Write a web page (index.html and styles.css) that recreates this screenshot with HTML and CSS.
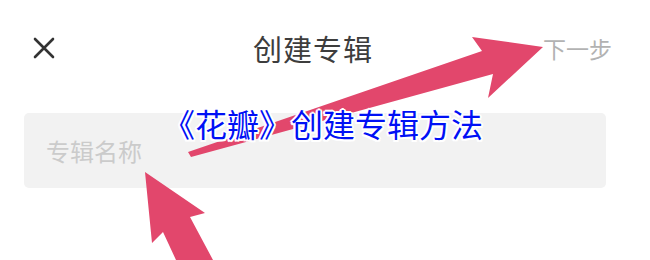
FILE: index.html
```html
<!DOCTYPE html>
<html lang="zh">
<head>
  <meta charset="UTF-8">
  <meta name="viewport" content="width=device-width, initial-scale=1.0">
  <title>创建专辑</title>
  <link rel="stylesheet" href="styles.css">
</head>
<body>
  <div class="page">
    <!-- 顶部栏 -->
    <div class="header">
      <svg class="close" width="22" height="22" viewBox="0 0 22 22">
        <path d="M2 2 L20 20 M20 2 L2 20" stroke="#333" stroke-width="2.6" stroke-linecap="round" fill="none"/>
      </svg>
      <div class="title">创建专辑</div>
      <div class="next">下一步</div>
    </div>
    <!-- 专辑名称输入框 -->
    <div class="field">
      <input class="name-input" type="text" placeholder="专辑名称">
    </div>

    <!-- 标注箭头 -->
    <svg class="arrows" width="650" height="260" viewBox="0 0 650 260">
      <polygon fill="#e2476c" points="188,152 482,51 472,37 543,47 488,98 493,74 191,157"/>
      <polygon fill="#e2476c" points="145,172 205,213 190,217 213,260 176,260 163,232 152,243"/>
    </svg>

    <div class="caption">《花瓣》创建专辑方法</div>
  </div>
</body>
</html>
```

FILE: styles.css
```css
body {
  margin: 0;
  background: #fff;
  font-family: "Noto Sans CJK SC", "Noto Sans", sans-serif;
}
.page {
  position: relative;
  width: 650px;
  height: 260px;
  overflow: hidden;
}
.header {
  display: flex;
  align-items: center;
  height: 96px;
  padding: 0 38px 0 33px;
}
.close {
  flex: none;
}
.title {
  margin-left: 198px;
  font-size: 29px;
  color: #3d3d3d;
  letter-spacing: 1px;
}
.next {
  margin-left: auto;
  font-size: 23px;
  color: #b2b2b2;
}
.field {
  margin: 17px 44px 0 24px;
}
.name-input {
  display: block;
  box-sizing: border-box;
  width: 100%;
  height: 75px;
  border: none;
  border-radius: 5px;
  background: #f2f2f2;
  padding: 0 22px;
  font-family: inherit;
  font-size: 24px;
  outline: none;
}
.name-input::placeholder {
  color: #cbcbcb;
}
.arrows {
  position: absolute;
  left: 0;
  top: 0;
}
/* 图片上的蓝色标题 */
.caption {
  position: absolute;
  left: 0;
  right: 0;
  top: 100px;
  text-align: center;
  padding-right: 4px;
  font-size: 32px;
  color: #0010f5;
  text-shadow: 2px 0 #fff, -2px 0 #fff, 0 2px #fff, 0 -2px #fff,
    1.5px 1.5px #fff, -1.5px -1.5px #fff, 1.5px -1.5px #fff, -1.5px 1.5px #fff;
}
```
